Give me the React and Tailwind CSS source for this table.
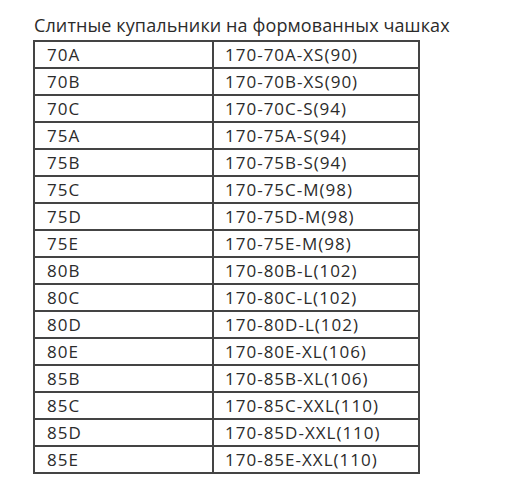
const rows = [
  ['70A', '170-70A-XS(90)'],
  ['70B', '170-70B-XS(90)'],
  ['70C', '170-70C-S(94)'],
  ['75A', '170-75A-S(94)'],
  ['75B', '170-75B-S(94)'],
  ['75C', '170-75C-M(98)'],
  ['75D', '170-75D-M(98)'],
  ['75E', '170-75E-M(98)'],
  ['80B', '170-80B-L(102)'],
  ['80C', '170-80C-L(102)'],
  ['80D', '170-80D-L(102)'],
  ['80E', '170-80E-XL(106)'],
  ['85B', '170-85B-XL(106)'],
  ['85C', '170-85C-XXL(110)'],
  ['85D', '170-85D-XXL(110)'],
  ['85E', '170-85E-XXL(110)'],
]

export default function App() {
  return (
    <div className="w-[512px] h-[493px] bg-white text-[#2b2b2b] font-['Open_Sans',sans-serif] font-medium">
      <div className="pl-[34px] pt-[12px] h-[40px] text-[18px] leading-[26px] tracking-[0.1px]">
        Слитные купальники на формованных чашках
      </div>
      <table className="ml-[33px] border-collapse border-2 border-[#444] text-[17px] leading-none tracking-[1px]">
        <tbody>
          {rows.map(([size, code]) => (
            <tr key={size} className="h-[27px]">
              <td className="w-[179px] border-2 border-[#444] pl-[12px] align-middle">{size}</td>
              <td className="w-[206px] border-2 border-[#444] pl-[11px] align-middle">{code}</td>
            </tr>
          ))}
        </tbody>
      </table>
    </div>
  )
}
